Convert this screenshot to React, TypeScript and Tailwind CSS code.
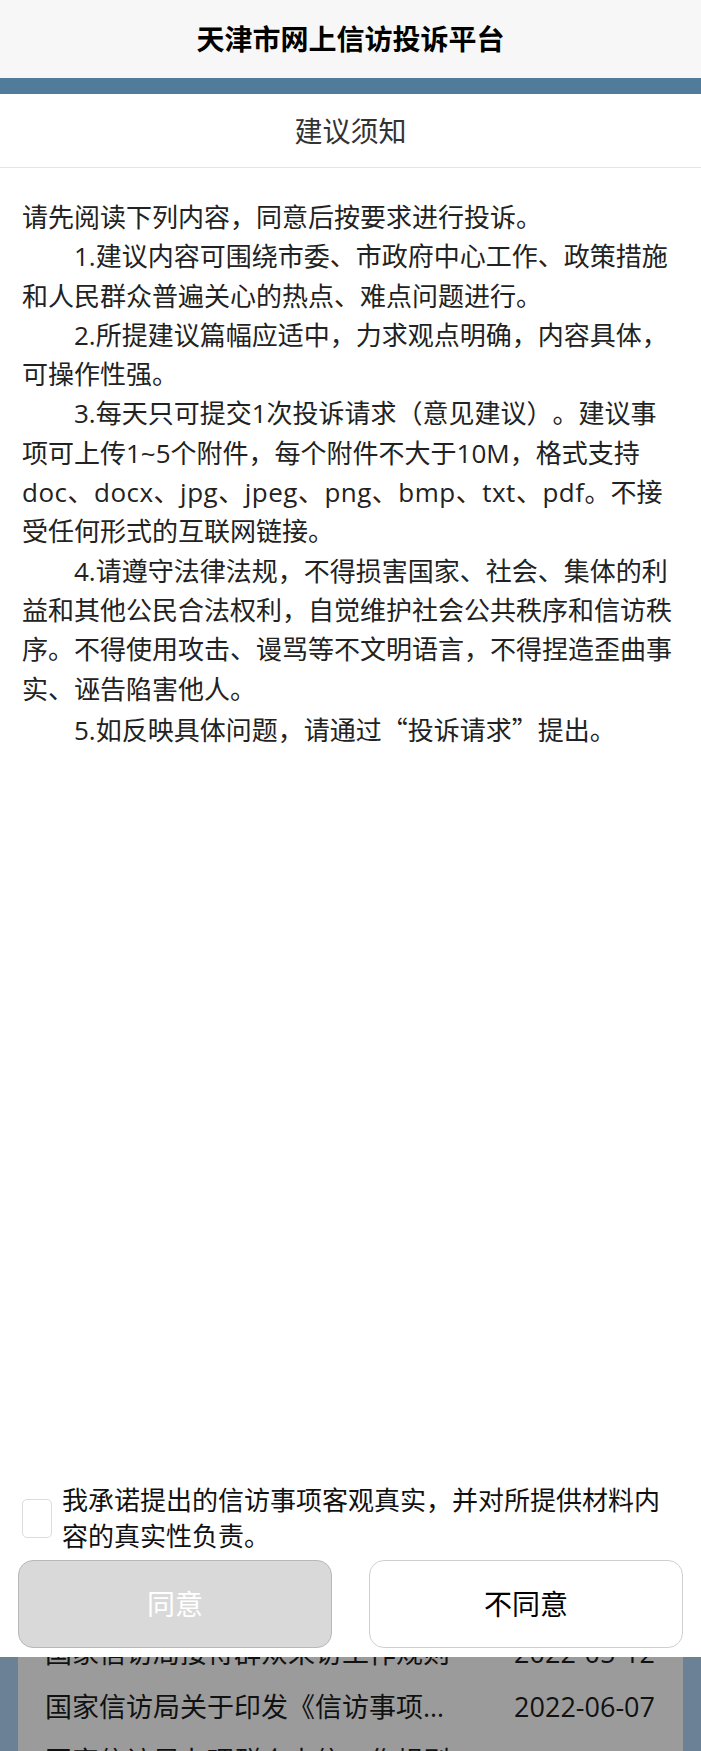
import React from "react";

const Q: React.FC<{ children: React.ReactNode }> = ({ children }) => (
	<span style={{ fontFamily: '"Noto Sans CJK SC", sans-serif' }}>{children}</span>
);

const notices: React.ReactNode[] = [
	"1.建议内容可围绕市委、市政府中心工作、政策措施和人民群众普遍关心的热点、难点问题进行。",
	"2.所提建议篇幅应适中，力求观点明确，内容具体，可操作性强。",
	<>
		3.每天只可提交1次投诉请求（意见建议）。建议事项可上传1~5个附件，每个附件不大于10M，格式支持
		<span className="tracking-[0.5px]">doc、docx、jpg、jpeg、png、bmp、txt、pdf</span>
		。不接受任何形式的互联网链接。
	</>,
	"4.请遵守法律法规，不得损害国家、社会、集体的利益和其他公民合法权利，自觉维护社会公共秩序和信访秩序。不得使用攻击、谩骂等不文明语言，不得捏造歪曲事实、诬告陷害他人。",
	<>
		5.如反映具体问题，请通过<Q>“</Q>投诉请求<Q>”</Q>提出。
	</>,
];

const policies = [
	{ title: "国家信访局接待群众来访工作规则", date: "2022-05-12" },
	{ title: "国家信访局关于印发《信访事项网上办理工作规程》的通知", date: "2022-06-07" },
	{ title: "国家信访局办理群众来信工作规则", date: "2022-06-08" },
];

const App: React.FC = () => {
	return (
		<div
			className="w-[701px] bg-white [text-spacing-trim:space-all]"
			style={{ fontFamily: '"Open Sans", "Noto Sans CJK SC", sans-serif' }}
		>
			<div className="flex h-[1657px] flex-col bg-white">
				<header className="flex h-[78px] items-center justify-center bg-[#f7f7f7]">
					<h1 className="text-[28px] font-bold text-black">天津市网上信访投诉平台</h1>
				</header>
				<div className="h-4 bg-[#507b9b]" />
				<div className="flex h-[74px] items-center justify-center border-b border-[#e5e5e5]">
					<span className="text-[28px] text-[#333]">建议须知</span>
				</div>

				<div className="flex-1 px-[22px] pt-[30px] text-[26px] leading-[39.3px] text-[#222]">
					<p>请先阅读下列内容，同意后按要求进行投诉。</p>
					{notices.map((n, i) => (
						<p key={i} className="indent-[52px]">
							{n}
						</p>
					))}
				</div>

				<label className="flex items-center gap-[10px] px-[22px] pb-[5px]">
					<span className="h-[39px] w-[30px] shrink-0 rounded-[5px] border border-[#dcdcdc] bg-white" />
					<span className="text-[26px] leading-[36px] text-[#111]">
						我承诺提出的信访事项客观真实，并对所提供材料内容的真实性负责。
					</span>
				</label>

				<div className="grid grid-cols-2 gap-[37px] px-[18px] pt-[1px] pb-[9px]">
					<button className="flex h-[88px] items-center justify-center rounded-[15px] border border-[#b8b8b8] bg-[#d9d9d9] text-[28px] text-white">
						同意
					</button>
					<button className="flex h-[88px] items-center justify-center rounded-[15px] border border-[#cfcfcf] bg-white text-[28px] text-black">
						不同意
					</button>
				</div>
			</div>

			<div className="h-[94px] overflow-hidden bg-[#6a8196] px-[18px]">
				<div className="h-full overflow-hidden bg-[#9b9b9b]">
					<ul className="-mt-[31px]">
						{policies.map((p) => (
							<li
								key={p.title}
								className="flex h-[54px] items-center justify-between pl-[27px] pr-[28px] text-[27px] text-[#111]"
							>
								<span className="w-[410px] truncate">{p.title}</span>
								<span>{p.date}</span>
							</li>
						))}
					</ul>
				</div>
			</div>
		</div>
	);
};

export default App;
